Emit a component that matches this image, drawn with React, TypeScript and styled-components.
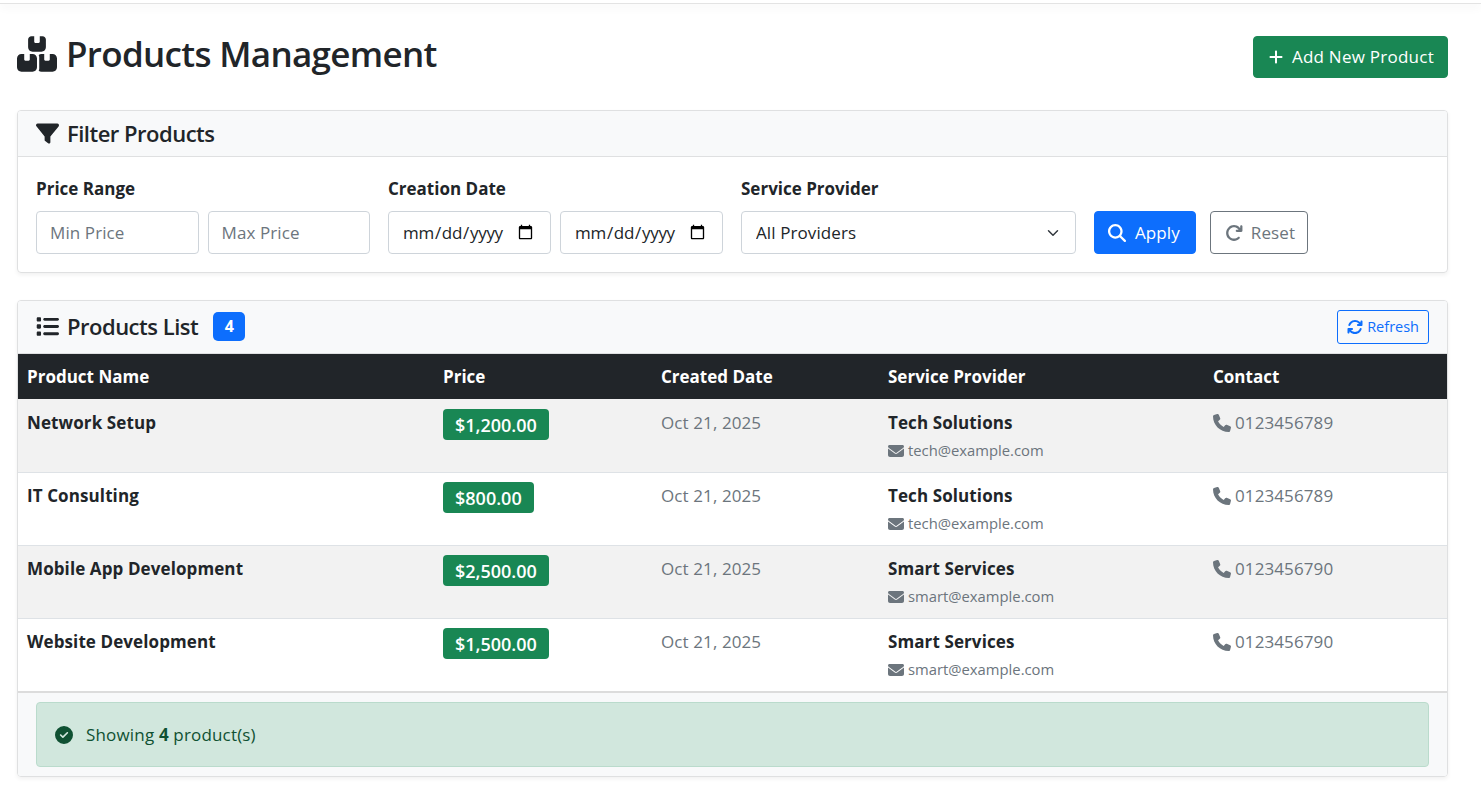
import { FC } from "react";
import styled, { createGlobalStyle } from "styled-components";
import {
  FaArrowRotateRight,
  FaArrowsRotate,
  FaBoxesStacked,
  FaCircleCheck,
  FaEnvelope,
  FaFilter,
  FaList,
  FaMagnifyingGlass,
  FaPhone,
  FaPlus,
} from "react-icons/fa6";

const products = [
  { name: "Network Setup", price: "$1,200.00", provider: "Tech Solutions", email: "tech@example.com", phone: "0123456789" },
  { name: "IT Consulting", price: "$800.00", provider: "Tech Solutions", email: "tech@example.com", phone: "0123456789" },
  { name: "Mobile App Development", price: "$2,500.00", provider: "Smart Services", email: "smart@example.com", phone: "0123456790" },
  { name: "Website Development", price: "$1,500.00", provider: "Smart Services", email: "smart@example.com", phone: "0123456790" },
];

const GlobalStyle = createGlobalStyle`
  * {
    box-sizing: border-box;
  }
  body {
    margin: 0;
    background: #fff;
    color: #212529;
    font-family: "Open Sans", "Noto Sans", sans-serif;
    font-size: 17px;
    line-height: 24px;
    letter-spacing: 0.1px;
  }
`;

const TopEdge = styled.div`
  height: 4px;
  background: #fff;
  border-bottom: 1px solid #e3e3e3;
  box-shadow: 0 3px 10px rgba(0, 0, 0, 0.06);
`;

const Page = styled.main`
  padding: 32px 33px 0 17px;
`;

const PageHeader = styled.header`
  display: flex;
  justify-content: space-between;
  align-items: flex-start;
  margin-bottom: 32px;
`;

const Title = styled.h1`
  display: flex;
  align-items: center;
  gap: 9px;
  height: 36px;
  margin: 0;
  font-size: 35px;
  font-weight: 600;
  line-height: 36px;
  letter-spacing: -0.68px;
`;

const Button = styled.button<{ $tone: "green" | "blue" | "grey" }>`
  display: inline-flex;
  align-items: center;
  gap: 9px;
  height: 43px;
  padding: 0 15px 0 13px;
  border-radius: 4px;
  border: 1px solid ${(p) => ({ green: "#198754", blue: "#0d6efd", grey: "#6c757d" })[p.$tone]};
  background: ${(p) => ({ green: "#198754", blue: "#0d6efd", grey: "transparent" })[p.$tone]};
  color: ${(p) => (p.$tone === "grey" ? "#6c757d" : "#fff")};
  font: inherit;
  font-size: 17px;
  letter-spacing: inherit;
`;

const AddButton = styled(Button)`
  gap: 8px;
  height: 42px;
  padding: 0 13px 0 14px;
  letter-spacing: 0.25px;
`;

const ResetButton = styled(Button)`
  gap: 8px;
  padding: 0 12px 0 14px;
`;

const Card = styled.section`
  margin-bottom: 27px;
  border: 1px solid #dfe0e1;
  border-radius: 4px;
  box-shadow: 0 2px 4px rgba(0, 0, 0, 0.06);
  overflow: hidden;
`;

const CardHeader = styled.div`
  display: flex;
  justify-content: space-between;
  align-items: center;
  padding: 0 18px;
  background: #f8f9fa;
  border-bottom: 1px solid #dfe0e1;
`;

const CardTitle = styled.h2<{ $tall?: boolean }>`
  display: flex;
  align-items: center;
  gap: 8px;
  height: ${(p) => (p.$tall ? "52px" : "45px")};
  margin: 0;
  padding-bottom: 2px;
  font-size: 22px;
  font-weight: 600;
  letter-spacing: -0.5px;
`;

const FilterIcon = styled(FaFilter)`
  margin-top: 2px;
`;

const CountBadge = styled.span`
  display: inline-flex;
  align-items: center;
  justify-content: center;
  width: 32px;
  height: 29px;
  margin-left: 7px;
  border-radius: 5px;
  background: #0d6efd;
  color: #fff;
  font-size: 16px;
  font-weight: 700;
`;

const FilterForm = styled.form`
  display: grid;
  grid-template-columns: 334px 335px 335px auto;
  column-gap: 18px;
  align-items: end;
  padding: 20px 18px 18px;
`;

const Field = styled.div`
  display: flex;
  flex-direction: column;
`;

const Label = styled.label`
  margin-bottom: 10px;
  font-weight: 700;
  line-height: 24px;
  letter-spacing: 0;
`;

const InputPair = styled.div`
  display: grid;
  grid-template-columns: minmax(0, 1fr) minmax(0, 1fr);
  gap: 9px;
`;

const Input = styled.input`
  width: 100%;
  min-width: 0;
  height: 43px;
  padding: 0 14px 0 13px;
  border: 1px solid #ced4da;
  border-radius: 4px;
  background: #fff;
  color: #212529;
  font: inherit;
  letter-spacing: inherit;

  &::placeholder {
    color: #6c757d;
  }

  &[type="date"] {
    letter-spacing: -0.3px;
  }
`;

const Select = styled.select`
  width: 100%;
  height: 43px;
  padding: 0 36px 0 14px;
  border: 1px solid #ced4da;
  border-radius: 4px;
  background: #fff
    url("data:image/svg+xml,%3csvg xmlns='http://www.w3.org/2000/svg' viewBox='0 0 16 16'%3e%3cpath fill='none' stroke='%23343a40' stroke-linecap='round' stroke-linejoin='round' stroke-width='2' d='m2 5 6 6 6-6'/%3e%3c/svg%3e")
    no-repeat right 14px center / 16px 12px;
  appearance: none;
  color: #212529;
  font: inherit;
  letter-spacing: inherit;
`;

const ButtonRow = styled.div`
  display: flex;
  gap: 14px;
`;

const RefreshButton = styled.button`
  display: inline-flex;
  align-items: center;
  gap: 4px;
  height: 34px;
  padding: 0 9px;
  border: 1px solid #0d6efd;
  border-radius: 3px;
  background: transparent;
  color: #0d6efd;
  font: inherit;
  font-size: 14.5px;
  letter-spacing: 0;
`;

const Table = styled.table`
  width: 100%;
  table-layout: fixed;
  border-collapse: separate;
  border-spacing: 0;
`;

const HeadCell = styled.th`
  height: 45px;
  padding: 0 9px;
  background: #212529;
  color: #fff;
  font-weight: 700;
  letter-spacing: 0;
  text-align: left;
`;

const Row = styled.tr`
  height: 73px;

  &:nth-child(odd) {
    background: #f2f2f2;
  }
`;

const Cell = styled.td`
  padding: 8px 9px 9px;
  border-top: 1px solid #dee2e6;
  vertical-align: top;

  ${Row}:first-child & {
    border-top-color: transparent;
  }
`;

const ProductName = styled.strong`
  display: block;
  margin-top: 3px;
  font-weight: 700;
`;

const PriceBadge = styled.span`
  display: inline-block;
  margin-top: 1px;
  padding: 4px 12px 2px;
  border-radius: 4px;
  background: #198754;
  color: #fff;
  font-size: 18px;
  font-weight: 600;
  line-height: 25px;
  letter-spacing: 0;
  vertical-align: top;
`;

const Muted = styled.span`
  display: inline-flex;
  align-items: center;
  gap: 4px;
  margin-top: 3px;
  color: #6c757d;
`;

const ProviderName = styled.strong`
  display: block;
  margin-top: 3px;
  font-weight: 700;
`;

const ProviderEmail = styled.small`
  display: flex;
  align-items: center;
  gap: 4px;
  margin-top: 5px;
  color: #6c757d;
  font-size: 14.8px;
  line-height: 21px;
  letter-spacing: 0;
`;

const CardFooter = styled.div`
  padding: 9px 18px;
  background: #f8f9fa;
  border-top: 2px solid #dcdcdc;
`;

const Alert = styled.div`
  display: flex;
  align-items: center;
  gap: 13px;
  height: 65px;
  padding: 1px 18px 0;
  border: 1px solid #badbcc;
  border-radius: 4px;
  background: #d1e7dd;
  color: #0f5132;
  letter-spacing: 0.17px;
`;

const App: FC = () => (
  <>
    <GlobalStyle />
    <TopEdge />
    <Page>
      <PageHeader>
        <Title>
          <FaBoxesStacked size={40} />
          Products Management
        </Title>
        <AddButton $tone="green">
          <FaPlus size={16} />
          Add New Product
        </AddButton>
      </PageHeader>

      <Card>
        <CardHeader>
          <CardTitle>
            <FilterIcon size={23} />
            Filter Products
          </CardTitle>
        </CardHeader>
        <FilterForm>
          <Field>
            <Label>Price Range</Label>
            <InputPair>
              <Input placeholder="Min Price" />
              <Input placeholder="Max Price" />
            </InputPair>
          </Field>
          <Field>
            <Label>Creation Date</Label>
            <InputPair>
              <Input type="date" />
              <Input type="date" />
            </InputPair>
          </Field>
          <Field>
            <Label>Service Provider</Label>
            <Select>
              <option>All Providers</option>
            </Select>
          </Field>
          <ButtonRow>
            <Button $tone="blue" type="button">
              <FaMagnifyingGlass size={18} />
              Apply
            </Button>
            <ResetButton $tone="grey" type="button">
              <FaArrowRotateRight size={18} />
              Reset
            </ResetButton>
          </ButtonRow>
        </FilterForm>
      </Card>

      <Card>
        <CardHeader>
          <CardTitle $tall>
            <FaList size={23} />
            Products List
            <CountBadge>4</CountBadge>
          </CardTitle>
          <RefreshButton type="button">
            <FaArrowsRotate size={16} />
            Refresh
          </RefreshButton>
        </CardHeader>
        <Table>
          <colgroup>
            <col width={416} />
            <col width={218} />
            <col width={227} />
            <col width={325} />
            <col />
          </colgroup>
          <thead>
            <tr>
              <HeadCell>Product Name</HeadCell>
              <HeadCell>Price</HeadCell>
              <HeadCell>Created Date</HeadCell>
              <HeadCell>Service Provider</HeadCell>
              <HeadCell>Contact</HeadCell>
            </tr>
          </thead>
          <tbody>
            {products.map((product) => (
              <Row key={product.name}>
                <Cell>
                  <ProductName>{product.name}</ProductName>
                </Cell>
                <Cell>
                  <PriceBadge>{product.price}</PriceBadge>
                </Cell>
                <Cell>
                  <Muted>Oct 21, 2025</Muted>
                </Cell>
                <Cell>
                  <ProviderName>{product.provider}</ProviderName>
                  <ProviderEmail>
                    <FaEnvelope size={16} />
                    {product.email}
                  </ProviderEmail>
                </Cell>
                <Cell>
                  <Muted>
                    <FaPhone size={18} />
                    {product.phone}
                  </Muted>
                </Cell>
              </Row>
            ))}
          </tbody>
        </Table>
        <CardFooter>
          <Alert>
            <FaCircleCheck size={18} />
            <span>
              Showing <strong>4</strong> product(s)
            </span>
          </Alert>
        </CardFooter>
      </Card>
    </Page>
  </>
);

export default App;
